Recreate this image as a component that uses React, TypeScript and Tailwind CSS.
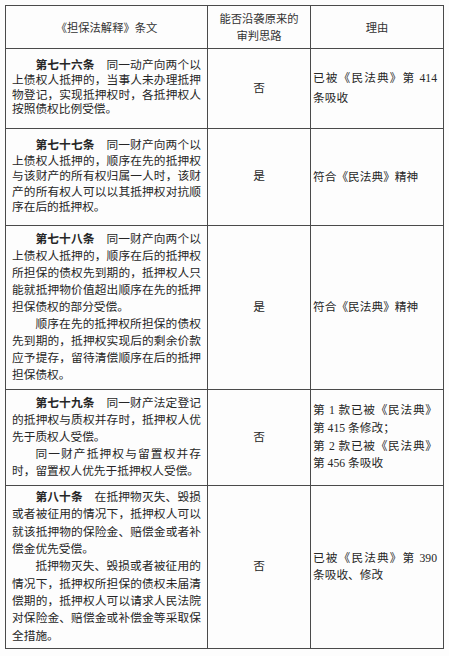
import React from 'react'

type Row = {
  h: string
  lead: string
  left: { bold?: string; lines: string[]; indentFirst?: boolean }[]
  mid: string
  right: string[]
  rightJust: number[]
  rightLead: string
}

const rows: Row[] = [
  {
    h: 'h-[80px]',
    lead: 'leading-[14.7px]',
    left: [
      {
        bold: '第七十六条',
        lines: ['　同一动产向两个以', '上债权人抵押的，当事人未办理抵押', '物登记，实现抵押权时，各抵押权人', '按照债权比例受偿。'],
      },
    ],
    mid: '否',
    right: ['已被《民法典》第 414', '条吸收'],
    rightJust: [0],
    rightLead: 'leading-[20px]',
  },
  {
    h: 'h-[97px]',
    lead: 'leading-[15.5px]',
    left: [
      {
        bold: '第七十七条',
        lines: ['　同一财产向两个以', '上债权人抵押的，顺序在先的抵押权', '与该财产的所有权归属一人时，该财', '产的所有权人可以以其抵押权对抗顺', '序在后的抵押权。'],
      },
    ],
    mid: '是',
    right: ['符合《民法典》精神'],
    rightJust: [],
    rightLead: 'leading-[17px]',
  },
  {
    h: 'h-[164px]',
    lead: 'leading-[17px]',
    left: [
      {
        bold: '第七十八条',
        lines: ['　同一财产向两个以', '上债权人抵押的，顺序在后的抵押权', '所担保的债权先到期的，抵押权人只', '能就抵押物价值超出顺序在先的抵押', '担保债权的部分受偿。'],
      },
      {
        lines: ['顺序在先的抵押权所担保的债权', '先到期的，抵押权实现后的剩余价款', '应予提存，留待清偿顺序在后的抵押', '担保债权。'],
        indentFirst: true,
      },
    ],
    mid: '是',
    right: ['符合《民法典》精神'],
    rightJust: [],
    rightLead: 'leading-[17px]',
  },
  {
    h: 'h-[96px]',
    lead: 'leading-[17px]',
    left: [
      {
        bold: '第七十九条',
        lines: ['　同一财产法定登记', '的抵押权与质权并存时，抵押权人优', '先于质权人受偿。'],
      },
      {
        lines: ['同一财产抵押权与留置权并存', '时，留置权人优先于抵押权人受偿。'],
        indentFirst: true,
      },
    ],
    mid: '否',
    right: ['第 1 款已被《民法典》', '第 415 条修改；', '第 2 款已被《民法典》', '第 456 条吸收'],
    rightJust: [0, 2],
    rightLead: 'leading-[17.7px]',
  },
  {
    h: 'h-[163px]',
    lead: 'leading-[17.3px]',
    left: [
      {
        bold: '第八十条',
        lines: ['　在抵押物灭失、毁损', '或者被征用的情况下，抵押权人可以', '就该抵押物的保险金、赔偿金或者补', '偿金优先受偿。'],
      },
      {
        lines: ['抵押物灭失、毁损或者被征用的', '情况下，抵押权所担保的债权未届清', '偿期的，抵押权人可以请求人民法院', '对保险金、赔偿金或补偿金等采取保', '全措施。'],
        indentFirst: true,
      },
    ],
    mid: '否',
    right: ['已被《民法典》第 390', '条吸收、修改'],
    rightJust: [0],
    rightLead: 'leading-[17px]',
  },
]

const just = 'text-justify [text-align-last:justify]'

const App = () => {
  return (
    <div className="min-h-[656px] w-[449px] bg-[#fdfdfd] pt-[5px] pl-[5px] text-[#262626] [font-family:'Liberation_Serif','Noto_Sans_CJK_SC',serif]">
      <table className="w-[438px] table-fixed border-collapse">
        <colgroup>
          <col className="w-[202px]" />
          <col className="w-[103px]" />
          <col className="w-[133px]" />
        </colgroup>
        <thead>
          {/* header row */}
          <tr className="h-[43px] text-[11.3px] leading-[17px] text-[#333] [font-family:'Noto_Sans_CJK_SC',sans-serif]">
            <th className="border border-[#4a4a4a] text-center font-normal">《担保法解释》条文</th>
            <th className="border border-[#4a4a4a] text-center font-normal">
              能否沿袭原来的
              <br />
              审判思路
            </th>
            <th className="border border-[#4a4a4a] text-center font-normal">理由</th>
          </tr>
        </thead>
        <tbody className="text-[11.7px]">
          {rows.map((r, i) => (
            <tr key={i} className={r.h}>
              <td className={`border border-[#4a4a4a] pl-[6px] pr-[6px] pb-[2px] align-middle ${r.lead}`}>
                {r.left.map((p, j) => (
                  <div key={j}>
                    {p.lines.map((l, k) => {
                      const last = k === p.lines.length - 1
                      if (k === 0 && p.bold) {
                        return (
                          <div key={k} className={`pl-[2em] ${just}`}>
                            <span className="font-bold [font-family:'Noto_Sans_CJK_SC',sans-serif]">{p.bold}</span>
                            {l}
                          </div>
                        )
                      }
                      return (
                        <div key={k} className={`${k === 0 && p.indentFirst ? 'pl-[2em]' : ''} ${last ? '' : just}`}>
                          {l}
                        </div>
                      )
                    })}
                  </div>
                ))}
              </td>
              <td className="border border-[#4a4a4a] text-center align-middle">{r.mid}</td>
              <td className={`border border-[#4a4a4a] pl-[2px] pr-[6px] align-middle ${r.rightLead}`}>
                {r.right.map((l, k) => (
                  <div key={k} className={r.rightJust.includes(k) ? just : ''}>
                    {l}
                  </div>
                ))}
              </td>
            </tr>
          ))}
        </tbody>
      </table>
    </div>
  )
}

export default App
